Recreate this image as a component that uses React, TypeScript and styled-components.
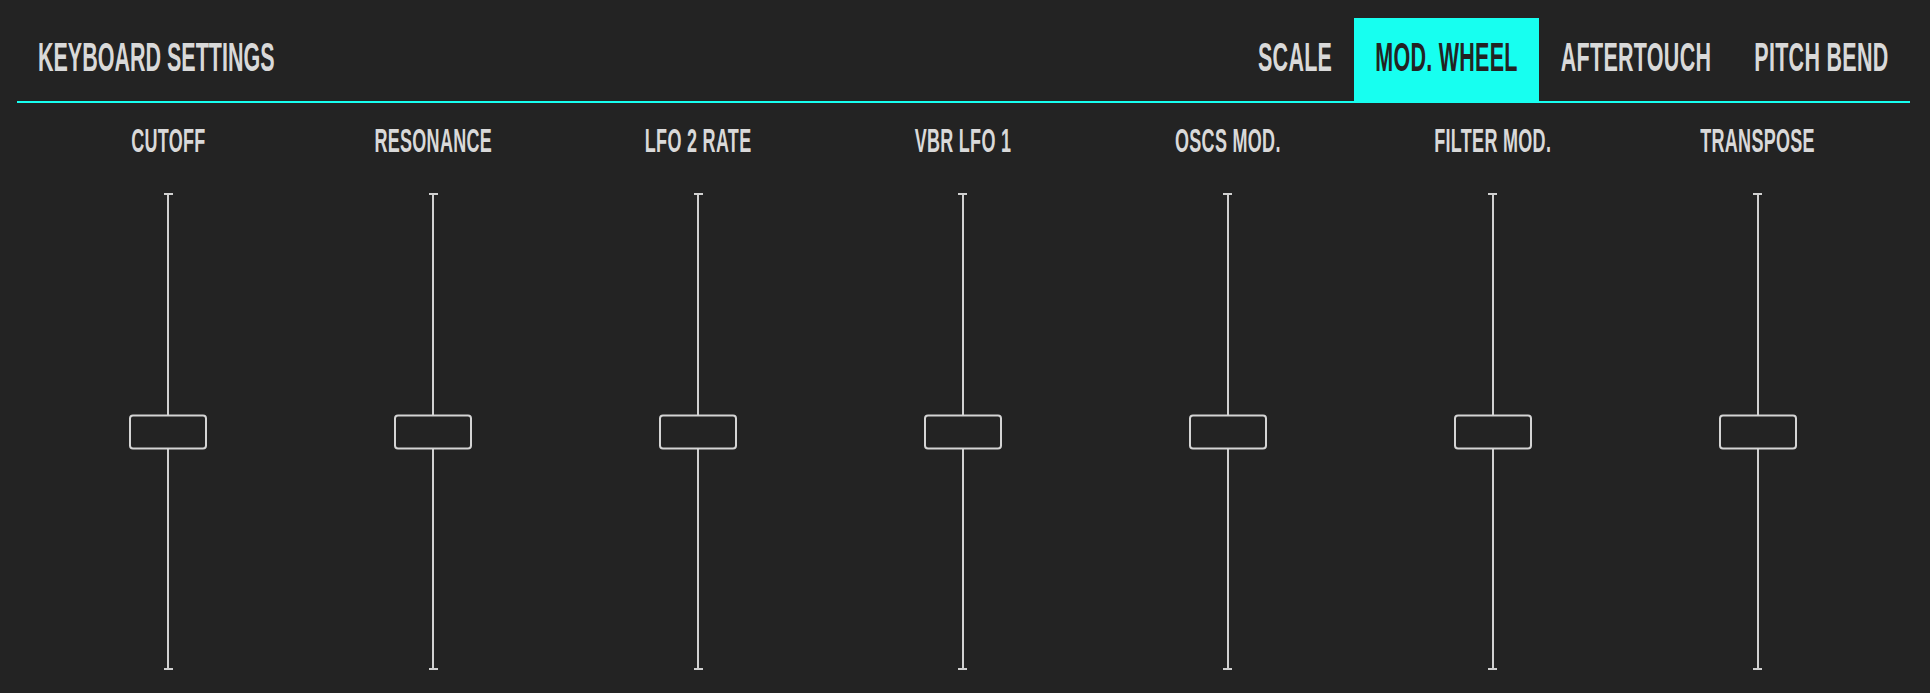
import styled, { createGlobalStyle } from 'styled-components';

const GlobalStyle = createGlobalStyle`
  html, body {
    margin: 0;
    padding: 0;
    background: #232323;
  }
  body {
    font-family: "Liberation Sans", Arial, sans-serif;
  }
`;

const Panel = styled.div`
  box-sizing: border-box;
  width: 1930px;
  height: 693px;
  padding: 18px 20px 0 17px;
  background: #232323;
  overflow: hidden;
`;

const Header = styled.header`
  display: flex;
  align-items: stretch;
  justify-content: space-between;
  height: 83px;
  border-bottom: 2px solid #17fff0;
`;

const Title = styled.h1`
  display: flex;
  align-items: center;
  margin: 0;
  padding-left: 21px;
  color: #d9d9d9;
`;

// narrow display face faked by stretching a small bold sans upward
const Condensed = styled.span<{ $size: number; $spacing?: number }>`
  display: inline-block;
  font-size: ${(p) => p.$size}px;
  font-weight: 700;
  line-height: 1;
  letter-spacing: ${(p) => p.$spacing ?? 0.2}px;
  transform: scaleY(1.87);
  white-space: nowrap;
`;

const Tabs = styled.nav`
  display: flex;
  align-items: stretch;
`;

const Tab = styled.button<{ $active?: boolean }>`
  display: flex;
  align-items: center;
  padding: 0 21.5px;
  border: 0;
  margin: 0;
  font-family: inherit;
  cursor: pointer;
  background: ${(p) => (p.$active ? '#17fff0' : 'transparent')};
  color: ${(p) => (p.$active ? '#232323' : '#d9d9d9')};
`;

const Sliders = styled.section`
  display: grid;
  grid-template-columns: repeat(7, 1fr);
  padding: 0 20px 0 19px;
`;

const Column = styled.div`
  display: flex;
  flex-direction: column;
  align-items: center;
`;

const Label = styled.div`
  height: 18px;
  margin-top: 29px;
  color: #d9d9d9;
`;

const Track = styled.div`
  position: relative;
  width: 2px;
  height: 477px;
  margin-top: 43px;
  background: #d0d0d0;

  &::before,
  &::after {
    content: '';
    position: absolute;
    left: 50%;
    width: 9px;
    height: 2px;
    margin-left: -4.5px;
    background: #d0d0d0;
  }
  &::before {
    top: 0;
  }
  &::after {
    bottom: 0;
  }
`;

const Thumb = styled.div`
  position: absolute;
  left: 50%;
  box-sizing: border-box;
  width: 78px;
  height: 35px;
  border: 2px solid #d4d4d4;
  border-radius: 4px;
  background: #232323;
  transform: translate(-50%, -50%);
`;

const tabs = ['SCALE', 'MOD. WHEEL', 'AFTERTOUCH', 'PITCH BEND'];

const sliders = [
  { name: 'CUTOFF', value: 0.5 },
  { name: 'RESONANCE', value: 0.5 },
  { name: 'LFO 2 RATE', value: 0.5 },
  { name: 'VBR LFO 1', value: 0.5 },
  { name: 'OSCS MOD.', value: 0.5 },
  { name: 'FILTER MOD.', value: 0.5 },
  { name: 'TRANSPOSE', value: 0.5 },
];

export default function App() {
  const activeTab = 'MOD. WHEEL';
  return (
    <Panel>
      <GlobalStyle />
      <Header>
        <Title>
          <Condensed $size={21.5} $spacing={0}>KEYBOARD SETTINGS</Condensed>
        </Title>
        <Tabs>
          {tabs.map((t) => (
            <Tab key={t} $active={t === activeTab}>
              <Condensed $size={21.5} $spacing={0.28}>{t}</Condensed>
            </Tab>
          ))}
        </Tabs>
      </Header>
      <Sliders>
        {sliders.map((s) => (
          <Column key={s.name}>
            <Label>
              <Condensed $size={18} $spacing={0.3}>{s.name}</Condensed>
            </Label>
            <Track>
              <Thumb style={{ top: `${(1 - s.value) * 100}%` }} />
            </Track>
          </Column>
        ))}
      </Sliders>
    </Panel>
  );
}
